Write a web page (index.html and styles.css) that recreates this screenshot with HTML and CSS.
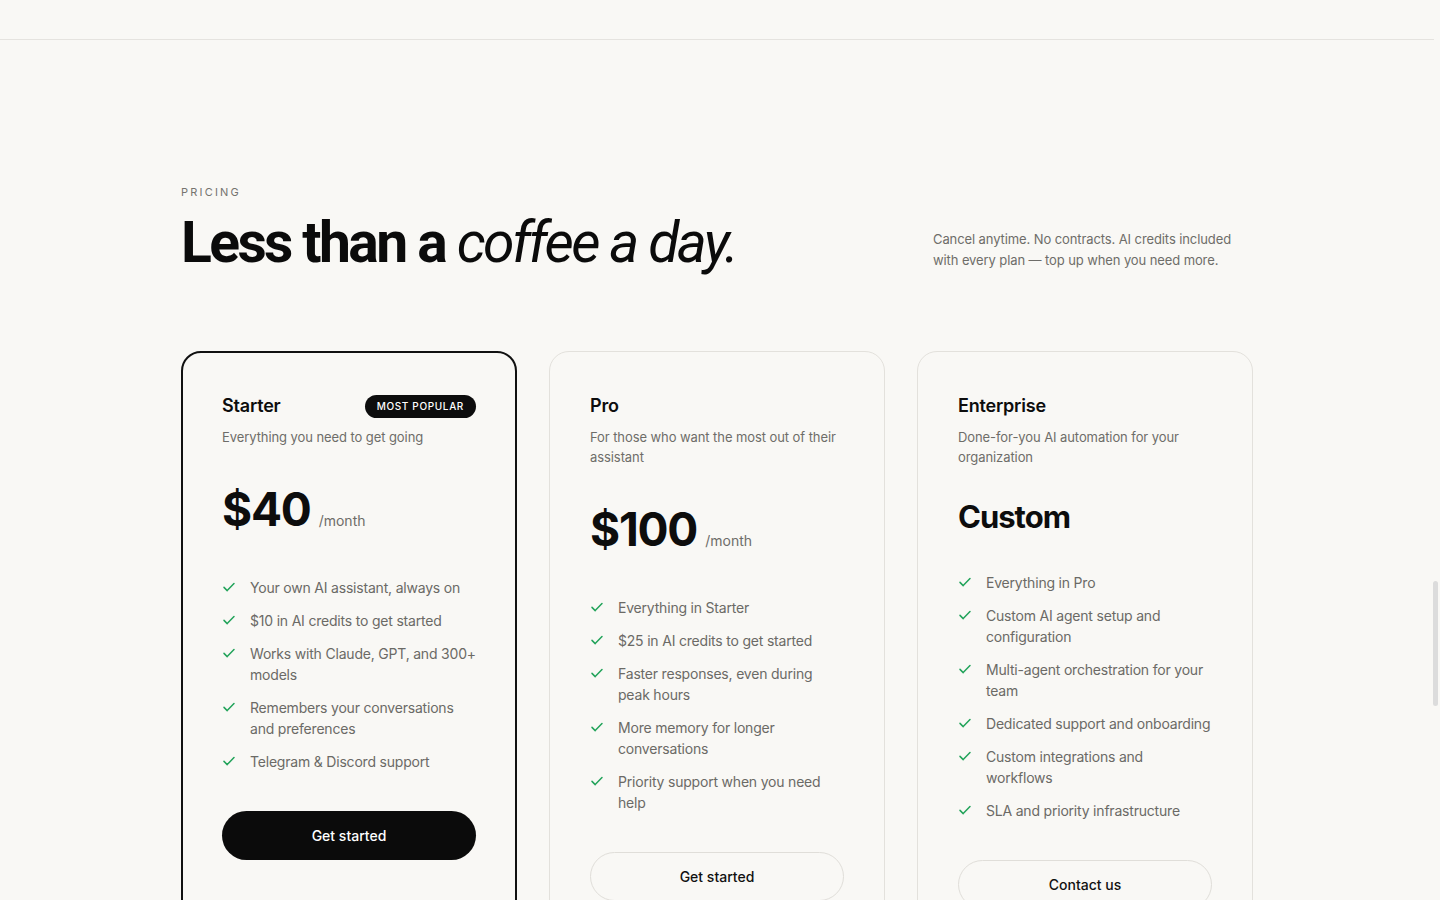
FILE: index.html
```html
<!DOCTYPE html>
<html lang="en">
<head>
    <meta charset="UTF-8">
    <meta name="viewport" content="width=device-width, initial-scale=1.0">
    <title>Pricing</title>
    <link rel="stylesheet" href="styles.css">
</head>
<body>
    <div class="page">
        <header class="topbar"></header>

        <section class="pricing">
            <p class="eyebrow">Pricing</p>
            <div class="pricing-head">
                <h1>Less than a <em>coffee a day.</em></h1>
                <p class="lead">Cancel anytime. No contracts. AI credits included with every plan — top up when you need more.</p>
            </div>

            <div class="plans">
                <!-- Starter -->
                <div class="plan plan-featured">
                    <div class="plan-top">
                        <h2>Starter</h2>
                        <span class="badge">Most popular</span>
                    </div>
                    <p class="plan-desc">Everything you need to get going</p>
                    <div class="price"><span class="amount">$40</span><span class="per">/month</span></div>
                    <ul class="features">
                        <li><svg viewBox="0 0 14 14"><path d="M2 7.4l3.2 3.2L12 3.6"/></svg><span>Your own AI assistant, always on</span></li>
                        <li><svg viewBox="0 0 14 14"><path d="M2 7.4l3.2 3.2L12 3.6"/></svg><span>$10 in AI credits to get started</span></li>
                        <li><svg viewBox="0 0 14 14"><path d="M2 7.4l3.2 3.2L12 3.6"/></svg><span>Works with Claude, GPT, and 300+ models</span></li>
                        <li><svg viewBox="0 0 14 14"><path d="M2 7.4l3.2 3.2L12 3.6"/></svg><span>Remembers your conversations and preferences</span></li>
                        <li><svg viewBox="0 0 14 14"><path d="M2 7.4l3.2 3.2L12 3.6"/></svg><span>Telegram &amp; Discord support</span></li>
                    </ul>
                    <button class="btn btn-dark">Get started</button>
                </div>

                <!-- Pro -->
                <div class="plan">
                    <div class="plan-top">
                        <h2>Pro</h2>
                    </div>
                    <p class="plan-desc">For those who want the most out of their assistant</p>
                    <div class="price"><span class="amount">$100</span><span class="per">/month</span></div>
                    <ul class="features">
                        <li><svg viewBox="0 0 14 14"><path d="M2 7.4l3.2 3.2L12 3.6"/></svg><span>Everything in Starter</span></li>
                        <li><svg viewBox="0 0 14 14"><path d="M2 7.4l3.2 3.2L12 3.6"/></svg><span>$25 in AI credits to get started</span></li>
                        <li><svg viewBox="0 0 14 14"><path d="M2 7.4l3.2 3.2L12 3.6"/></svg><span>Faster responses, even during peak hours</span></li>
                        <li><svg viewBox="0 0 14 14"><path d="M2 7.4l3.2 3.2L12 3.6"/></svg><span>More memory for longer conversations</span></li>
                        <li><svg viewBox="0 0 14 14"><path d="M2 7.4l3.2 3.2L12 3.6"/></svg><span>Priority support when you need help</span></li>
                    </ul>
                    <button class="btn btn-outline">Get started</button>
                </div>

                <!-- Enterprise -->
                <div class="plan">
                    <div class="plan-top">
                        <h2>Enterprise</h2>
                    </div>
                    <p class="plan-desc">Done-for-you AI automation for your organization</p>
                    <div class="price price-custom"><span class="amount">Custom</span></div>
                    <ul class="features">
                        <li><svg viewBox="0 0 14 14"><path d="M2 7.4l3.2 3.2L12 3.6"/></svg><span>Everything in Pro</span></li>
                        <li><svg viewBox="0 0 14 14"><path d="M2 7.4l3.2 3.2L12 3.6"/></svg><span>Custom AI agent setup and configuration</span></li>
                        <li><svg viewBox="0 0 14 14"><path d="M2 7.4l3.2 3.2L12 3.6"/></svg><span>Multi-agent orchestration for your team</span></li>
                        <li><svg viewBox="0 0 14 14"><path d="M2 7.4l3.2 3.2L12 3.6"/></svg><span>Dedicated support and onboarding</span></li>
                        <li><svg viewBox="0 0 14 14"><path d="M2 7.4l3.2 3.2L12 3.6"/></svg><span>Custom integrations and workflows</span></li>
                        <li><svg viewBox="0 0 14 14"><path d="M2 7.4l3.2 3.2L12 3.6"/></svg><span>SLA and priority infrastructure</span></li>
                    </ul>
                    <button class="btn btn-outline">Contact us</button>
                </div>
            </div>
        </section>
    </div>
    <div class="scroll-thumb"></div>
</body>
</html>
```

FILE: styles.css
```css
html {
    overflow: hidden;
}
body {
    font-family: 'Inter', 'Noto Sans', sans-serif;
    background-color: #f9f8f5;
    color: #0d0d0d;
    margin: 0;
    height: 100vh;
    overflow: hidden;
}
.page {
    margin-right: 6px;
}
.topbar {
    height: 39px;
    border-bottom: 1px solid #e5e3df;
}
.pricing {
    width: 1072px;
    margin: 0 auto;
    padding-top: 144px;
}
.eyebrow {
    margin: 0;
    font-size: 11px;
    line-height: 16px;
    letter-spacing: 2.2px;
    text-transform: uppercase;
    color: #76746f;
}
.pricing-head {
    display: flex;
    justify-content: space-between;
    align-items: flex-end;
    margin-top: 9px;
    margin-bottom: 74px;
}
h1 {
    margin: 0;
    font-family: 'Roboto', 'Inter', sans-serif;
    font-size: 57px;
    line-height: 68px;
    font-weight: 700;
    letter-spacing: -2.6px;
    color: #0b0b0b;
}
h1 em {
    font-weight: 400;
    letter-spacing: -2.6px;
}
.lead {
    width: 320px;
    margin: 0 0 6px;
    font-size: 13px;
    line-height: 21px;
    letter-spacing: -0.1px;
    color: #6e6d69;
}
.plans {
    display: grid;
    grid-template-columns: repeat(3, 1fr);
    gap: 32px;
    align-items: start;
}
.plan {
    border: 1px solid #e3e1dc;
    border-radius: 20px;
    padding: 42px 40px 60px;
}
.plan-featured {
    border: 2px solid #111;
    padding: 41px 39px 59px;
}
.plan-top {
    display: flex;
    justify-content: space-between;
    align-items: center;
    height: 24px;
}
h2 {
    margin: 0;
    font-size: 18px;
    line-height: 24px;
    font-weight: 600;
    letter-spacing: -0.2px;
}
.badge {
    background: #0d0d0d;
    color: #fff;
    font-size: 10px;
    font-weight: 500;
    letter-spacing: 0.65px;
    text-transform: uppercase;
    padding: 0 12px;
    height: 23px;
    line-height: 23px;
    border-radius: 12px;
}
.plan-desc {
    margin: 9px 0 0;
    font-size: 13px;
    line-height: 20px;
    letter-spacing: -0.08px;
    color: #6e6d69;
}
.price {
    display: flex;
    align-items: baseline;
    gap: 8px;
    margin: 40px 0 46px;
}
.amount {
    font-size: 46px;
    line-height: 44px;
    font-weight: 700;
    letter-spacing: -1.2px;
}
.per {
    font-size: 14px;
    color: #6e6d69;
}
.price-custom {
    margin: 34px 0 39px;
}
.price-custom .amount {
    font-size: 31px;
    line-height: 32px;
    letter-spacing: -1px;
}
.features {
    list-style: none;
    margin: 0;
    padding: 0;
    display: flex;
    flex-direction: column;
    gap: 12px;
}
.features li {
    display: flex;
    gap: 14px;
    font-size: 14px;
    line-height: 21px;
    letter-spacing: -0.2px;
    color: #6b6a66;
}
.features svg {
    flex: none;
    width: 14px;
    height: 14px;
    margin-top: 3px;
    fill: none;
    stroke: #22a35a;
    stroke-width: 1.5;
    stroke-linecap: round;
    stroke-linejoin: round;
}
.btn {
    display: block;
    width: 100%;
    height: 49px;
    margin-top: 39px;
    border-radius: 25px;
    font-family: inherit;
    font-size: 14px;
    font-weight: 500;
    cursor: pointer;
}
.btn-dark {
    background: #0b0b0b;
    color: #fff;
    border: none;
}
.btn-outline {
    background: transparent;
    color: #111;
    border: 1px solid #e0ded9;
}
.scroll-thumb {
    position: fixed;
    right: 2px;
    top: 581px;
    width: 5px;
    height: 125px;
    border-radius: 3px;
    background: #dcdcdc;
}
```
